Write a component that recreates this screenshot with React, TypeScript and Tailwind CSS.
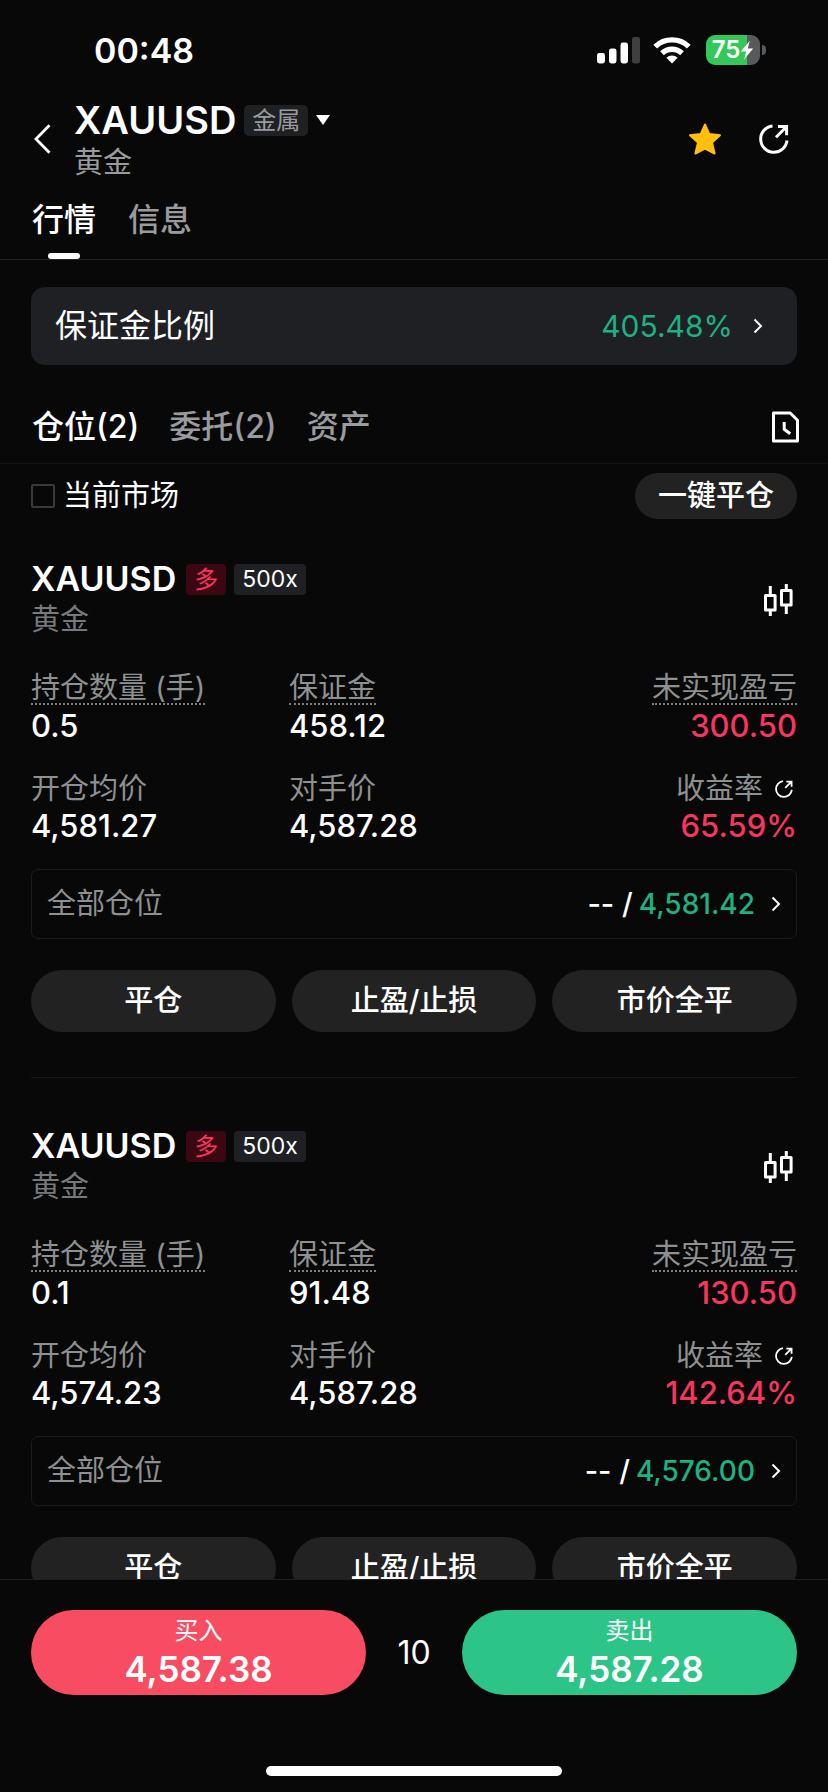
import type { ReactNode } from "react";

const positions = [
  {
    symbol: "XAUUSD",
    name: "黄金",
    side: "多",
    leverage: "500x",
    size: "0.5",
    margin: "458.12",
    pnl: "300.50",
    entry: "4,581.27",
    market: "4,587.28",
    roi: "65.59%",
    stop: "4,581.42",
  },
  {
    symbol: "XAUUSD",
    name: "黄金",
    side: "多",
    leverage: "500x",
    size: "0.1",
    margin: "91.48",
    pnl: "130.50",
    entry: "4,574.23",
    market: "4,587.28",
    roi: "142.64%",
    stop: "4,576.00",
  },
];

type Position = (typeof positions)[number];

function ShareIcon({ className }: { className: string }) {
  return (
    <svg viewBox="0 0 30 30" fill="none" stroke="currentColor" strokeWidth="3" className={className}>
      <path d="M13.5 1.9A13.2 13.2 0 1 0 28 16.5" />
      <path d="M17 13.2 27 3.2M19 2.6h8.6v8.6" />
    </svg>
  );
}

function ChevronRight() {
  return (
    <svg viewBox="0 0 10 16" fill="none" stroke="currentColor" strokeWidth="2" className="h-4 w-[10px]">
      <path d="M1.5 1.5 8 8l-6.5 6.5" />
    </svg>
  );
}

function CandlesIcon() {
  return (
    <svg viewBox="0 0 30 34" fill="none" stroke="currentColor" strokeWidth="3" strokeLinejoin="round" className="h-[34px] w-[30px]">
      <path d="M2.5 12.5h9.6v14.5h-9.6zM7.3 3v9.5M7.3 27v6" />
      <path d="M18.5 7.5h9.6v14.5h-9.6zM23.3 1v6.5M23.3 22v9" />
    </svg>
  );
}

function StatusBar() {
  return (
    <div className="flex h-[100px] items-center justify-between pr-[62px] pl-[94px]">
      <span className="text-[34px] font-semibold">00:48</span>
      <div className="flex items-center">
        <svg viewBox="0 0 44 28" className="h-7 w-11" fill="#fff">
          <rect x="0" y="17" width="8" height="10.5" rx="2.4" />
          <rect x="12" y="12.5" width="7.5" height="15" rx="2.4" />
          <rect x="23.5" y="6.5" width="7.5" height="21" rx="2.4" />
          <rect x="35" y="1" width="8" height="26.5" rx="2.4" fill="#3f3f40" />
        </svg>
        <svg viewBox="0 0 38 28" className="ml-3 h-7 w-[38px]">
          <g fill="none" stroke="#fff" strokeWidth="5.4">
            <path d="M2.2 10.6a24.3 24.3 0 0 1 33.6 0" />
            <path d="M9 17.2a14.6 14.6 0 0 1 20 0" />
          </g>
          <path d="m19 27.5-5.6-5.7a8.2 8.2 0 0 1 11.2 0z" fill="#fff" />
        </svg>
        <div className="ml-[15px] flex h-[30px] w-[54px] items-center justify-center rounded-[9px] bg-linear-to-r from-[#34c759] from-76% to-[#58595b] to-76%">
          <span className="text-[24px] leading-none font-semibold">75</span>
          <svg viewBox="0 0 14 20" className="h-5 w-[14px]" fill="#fff">
            <path d="M9.8.8.8 11.4h5.4L4.2 19.2l9-10.8H7.8z" />
          </svg>
        </div>
        <div className="ml-[2px] h-[10px] w-1 rounded-r-full bg-[#58595b]" />
      </div>
    </div>
  );
}

function Header() {
  return (
    <header className="flex items-center pr-[39px] pl-[34px]">
      <button aria-label="返回" className="w-10">
        <svg viewBox="0 0 17 30" fill="none" stroke="currentColor" strokeWidth="2.8" className="h-[30px] w-[17px]">
          <path d="M15.5 1.2 2 15l13.5 13.8" />
        </svg>
      </button>
      <div className="flex-1">
        <div className="flex h-10 items-center">
          <h1 className="text-[38px] leading-10 font-semibold">XAUUSD</h1>
          <span className="ml-2 rounded-[5px] bg-[#1f2022] px-2 text-[24px] leading-[31px] text-[#9a9b9e]">金属</span>
          <button aria-label="切换品种" className="ml-2">
            <svg viewBox="0 0 14 10" className="h-[10px] w-[14px]" fill="currentColor">
              <path d="M0 0h14L7 10z" />
            </svg>
          </button>
        </div>
        <p className="mt-[9px] text-[29px] leading-7 text-[#9a9b9e]">黄金</p>
      </div>
      <button aria-label="收藏">
        <svg viewBox="0 0 32 32" className="h-8 w-8" fill="#ffbf0a" stroke="#ffbf0a" strokeWidth="2" strokeLinejoin="round">
          <path d="m16 1.5 4.3 9.6 10.7 1.1-8 7.2 2.6 11.1L16 25.6 6.4 30.5 9 19.4l-8-7.2 10.7-1.1z" />
        </svg>
      </button>
      <button aria-label="分享" className="ml-[38px]">
        <ShareIcon className="h-[30px] w-[30px]" />
      </button>
    </header>
  );
}

function Stat({
  label,
  value,
  dotted,
  end,
  icon,
}: {
  label: string;
  value: string;
  dotted?: boolean;
  end?: boolean;
  icon?: ReactNode;
}) {
  return (
    <div className={end ? "flex flex-col items-end" : "flex flex-col items-start"}>
      <dt
        className={`mb-px flex h-[33px] items-center text-[29px] leading-[31px] whitespace-nowrap text-[#8e9092] ${
          dotted ? "border-b-2 border-dotted border-[#7d7f81]" : ""
        }`}
      >
        {label}
        {icon}
      </dt>
      <dd className={`text-[31px] leading-10 font-medium ${end ? "text-[#f6365f]" : ""}`}>{value}</dd>
    </div>
  );
}

function PositionCard({ position }: { position: Position }) {
  const actions = ["平仓", "止盈/止损", "市价全平"];

  return (
    <article className="border-b border-[#171717] pt-12 pb-[45px] first:pt-10 last:border-b-0">
      <div className="flex items-center justify-between pr-1">
        <div>
          <div className="flex h-10 items-center">
            <h2 className="text-[34px] leading-10 font-semibold">{position.symbol}</h2>
            <span className="ml-[10px] rounded-[4px] bg-[#3a0712] px-2 text-[24px] leading-[31px] text-[#f6365f]">
              {position.side}
            </span>
            <span className="ml-2 rounded-[4px] bg-[#1f2023] px-2 text-[23px] leading-[31px]">
              {position.leverage}
            </span>
          </div>
          <p className="text-[29px] leading-[42px] text-[#77797c]">{position.name}</p>
        </div>
        <button aria-label="图表">
          <CandlesIcon />
        </button>
      </div>

      <dl className="mt-[31px] grid grid-cols-[258fr_250fr_258fr] gap-y-[26px]">
        <Stat label="持仓数量 (手)" value={position.size} dotted />
        <Stat label="保证金" value={position.margin} dotted />
        <Stat label="未实现盈亏" value={position.pnl} dotted end />
        <Stat label="开仓均价" value={position.entry} />
        <Stat label="对手价" value={position.market} />
        <Stat
          label="收益率"
          value={position.roi}
          end
          icon={<ShareIcon className="mr-1 ml-3 h-[18px] w-[18px] text-white" />}
        />
      </dl>

      <button className="mt-[23px] flex h-[70px] w-full items-center rounded-[7px] border border-[#1c1c1c] px-[15px] text-[29px]">
        <span className="text-[#8e9092]">全部仓位</span>
        <span className="ml-auto font-medium">-- /</span>
        <span className="mr-4 ml-[6px] text-[28px] font-medium text-[#1eb182]">{position.stop}</span>
        <ChevronRight />
      </button>

      <div className="mt-[31px] grid grid-cols-3 gap-4">
        {actions.map((action) => (
          <button key={action} className="h-[62px] rounded-full bg-[#222] text-[29px] font-medium">
            {action}
          </button>
        ))}
      </div>
    </article>
  );
}

export default function App() {
  return (
    <div className="flex h-screen flex-col overflow-hidden bg-[#080808] font-[Inter,'Noto_Sans_CJK_SC',sans-serif] text-white">
      <StatusBar />
      <Header />

      <nav className="mt-4 flex gap-8 border-b border-[#242424] px-8 text-[32px] font-medium">
        <button className="flex flex-col items-center">
          <span className="leading-[54px]">行情</span>
          <span className="mt-[6px] h-[6px] w-8 rounded-[3px] bg-white" />
        </button>
        <button className="flex flex-col text-[#9a9b9e]">
          <span className="leading-[54px]">信息</span>
        </button>
      </nav>

      <main className="min-h-0 flex-1 overflow-hidden">
        <div className="px-[31px] pt-[27px]">
          <button className="flex h-[78px] w-full items-center rounded-[14px] bg-[#1f2023] pr-[34px] pl-6 text-[32px]">
            保证金比例
            <span className="mr-5 ml-auto text-[30px] text-[#1eb182]">405.48%</span>
            <ChevronRight />
          </button>
        </div>

        <nav className="mt-[25px] flex h-[74px] items-center gap-[30px] border-b border-[#131313] px-8 text-[32px] font-medium">
          <button>仓位(2)</button>
          <button className="text-[#9a9b9e]">委托(2)</button>
          <button className="text-[#9a9b9e]">资产</button>
          <button aria-label="历史记录" className="-mr-[3px] ml-auto">
            <svg viewBox="0 0 28 32" fill="none" stroke="currentColor" strokeWidth="3" strokeLinejoin="round" className="h-8 w-7">
              <path d="M2.5 2h16.7l7.3 7.3V30h-24z" />
              <path d="M13.2 11v7.2l6 4.6" />
            </svg>
          </button>
        </nav>

        <div className="px-[31px] pt-[9px]">
          <div className="flex items-center justify-between">
            <label className="flex items-center gap-2 text-[29px]">
              <input type="checkbox" className="h-6 w-6 appearance-none rounded-[2px] border-2 border-[#3a3a3b] checked:bg-[#1eb182]" />
              当前市场
            </label>
            <button className="h-[46px] rounded-full bg-[#222] px-[23px] text-[29px] font-medium">一键平仓</button>
          </div>
          <div>
            {positions.map((position) => (
              <PositionCard key={position.entry} position={position} />
            ))}
          </div>
        </div>
      </main>

      <footer className="border-t border-[#1f1f1f] px-[31px] pt-[30px] pb-4">
        <div className="grid grid-cols-[1fr_96px_1fr] items-center text-center">
          <button className="flex h-[85px] flex-col items-center justify-center rounded-full bg-[#f84c62] pb-1">
            <span className="text-[24px] leading-9">买入</span>
            <span className="text-[35px] leading-10 font-semibold">4,587.38</span>
          </button>
          <span className="text-[32px]">10</span>
          <button className="flex h-[85px] flex-col items-center justify-center rounded-full bg-[#2dc487] pb-1">
            <span className="text-[24px] leading-9">卖出</span>
            <span className="text-[35px] leading-10 font-semibold">4,587.28</span>
          </button>
        </div>
        <div className="mx-auto mt-[71px] h-[10px] w-[296px] rounded-full bg-white" />
      </footer>
    </div>
  );
}
